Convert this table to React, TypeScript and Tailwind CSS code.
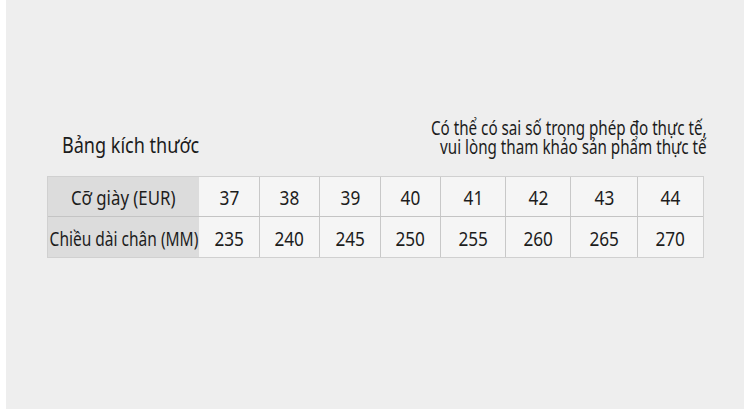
const sizes = [
  { eur: "37", mm: "235", w: "w-[60px]" },
  { eur: "38", mm: "240", w: "w-[60px]" },
  { eur: "39", mm: "245", w: "w-[61px]" },
  { eur: "40", mm: "250", w: "w-[60px]" },
  { eur: "41", mm: "255", w: "w-[65px]" },
  { eur: "42", mm: "260", w: "w-[65px]" },
  { eur: "43", mm: "265", w: "w-[67px]" },
  { eur: "44", mm: "270", w: "w-[66px]" },
];

export default function App() {
  return (
    <div className="flex h-[409px] w-[750px] bg-white px-[6px] font-['Noto_Sans',sans-serif] text-[#1c1c1c]">
      <main className="flex flex-1 flex-col bg-[#eeeeee] pt-[115px]">
        <div className="flex items-start justify-between pl-[56px] pr-[37px]">
          <h1 className="mt-[15px] origin-left scale-x-[0.82] whitespace-nowrap text-[22px] leading-[28px]">Bảng kích thước</h1>
          <div className="mt-[4px] flex origin-right scale-x-[0.8] flex-col items-end whitespace-nowrap text-[19px] leading-[19px]">
            <span>Có thể có sai số trong phép đo thực tế,</span>
            <span>vui lòng tham khảo sản phẩm thực tế</span>
          </div>
        </div>

        <div className="ml-[41px] mt-[18px] flex w-fit flex-col border border-[#d0d0d0] text-[20px]">
          <div className="flex h-[40px] border-b border-[#c4c4c4]">
            <div className="flex w-[151px] items-center justify-center bg-[#dcdcdc] pt-[3px]">
              <span className="scale-x-[0.84] whitespace-nowrap">Cỡ giày (EUR)</span>
            </div>
            {sizes.map((s, i) => (
              <div
                key={s.eur}
                className={`flex ${s.w} items-center justify-center bg-[#f5f5f5] pt-[3px] ${i > 0 ? "border-l border-[#c8c8c8]" : ""}`}
              >
                <span className="scale-x-[0.86]">{s.eur}</span>
              </div>
            ))}
          </div>
          <div className="flex h-[40px]">
            <div className="flex w-[151px] items-center justify-center bg-[#dcdcdc] pt-[3px]">
              <span className="scale-x-[0.775] whitespace-nowrap">Chiều dài chân (MM)</span>
            </div>
            {sizes.map((s, i) => (
              <div
                key={s.mm}
                className={`flex ${s.w} items-center justify-center bg-[#f5f5f5] pt-[3px] ${i > 0 ? "border-l border-[#c8c8c8]" : ""}`}
              >
                <span className="scale-x-[0.86]">{s.mm}</span>
              </div>
            ))}
          </div>
        </div>
      </main>
    </div>
  );
}
